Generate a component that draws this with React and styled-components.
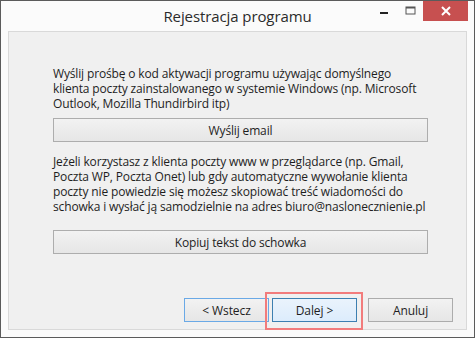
import React from 'react';
import styled, { createGlobalStyle } from 'styled-components';

const GlobalStyle = createGlobalStyle`
  html, body {
    margin: 0;
    padding: 0;
    background: #ffffff;
  }
  body {
    font-family: "Open Sans", "Noto Sans", sans-serif;
  }
`;

// okno dialogu
const Window = styled.div`
  position: relative;
  box-sizing: border-box;
  width: 475px;
  height: 338px;
  border: 1px solid #5b5b5b;
  background: #fbfbfb;
  display: flex;
  flex-direction: column;
`;

const TitleBar = styled.div`
  position: relative;
  height: 30px;
  display: flex;
  align-items: center;
  justify-content: center;
`;

const Title = styled.div`
  font-size: 15px;
  color: #2b2b2b;
  letter-spacing: -0.1px;
  margin-top: -1px;
`;

const Controls = styled.div`
  position: absolute;
  top: 0;
  right: 6px;
  display: flex;
  align-items: flex-start;
`;

const CtrlButton = styled.div`
  width: ${p => p.wide ? '45px' : '26px'};
  height: 20px;
  display: flex;
  align-items: center;
  justify-content: center;
  background: ${p => p.close ? '#c75050' : 'transparent'};
`;

const Panel = styled.div`
  margin: 0 7px 7px 7px;
  flex: 1;
  background: #f0f0f0;
  border: 1px solid #d9d9d9;
  padding: 34px 38px 0 44px;
  display: flex;
  flex-direction: column;
`;

const Text = styled.p`
  margin: 0;
  margin-top: ${p => p.top || 0}px;
  font-size: 12px;
  line-height: 15px;
  color: #1e1e1e;
  letter-spacing: -0.15px;
  white-space: nowrap;
`;

const WideButton = styled.div`
  margin-top: ${p => p.top || 5}px;
  height: 24px;
  box-sizing: border-box;
  border: 1px solid #adadad;
  background: linear-gradient(#f2f2f2, #e6e6e6);
  display: flex;
  align-items: center;
  justify-content: center;
  font-size: 12px;
  color: #1e1e1e;
  letter-spacing: -0.15px;
`;

const Footer = styled.div`
  margin-top: auto;
  margin-right: -25px;
  margin-bottom: 7px;
  display: flex;
  justify-content: flex-end;
  align-items: center;
`;

const NavButton = styled.div`
  position: relative;
  box-sizing: border-box;
  width: 85px;
  height: 24px;
  margin-left: ${p => p.gap || 0}px;
  border: 1px solid ${p => p.variant === 'default' ? '#3c7fb1' : p.variant === 'focus' ? '#6aa9e6' : '#acacac'};
  background: ${p => p.variant === 'default'
    ? 'linear-gradient(#eaf3fc, #dcecfc)'
    : 'linear-gradient(#f2f2f2, #e6e6e6)'};
  display: flex;
  align-items: center;
  justify-content: center;
  font-size: 12px;
  color: #1e1e1e;
  letter-spacing: -0.1px;
`;

const Highlight = styled.div`
  position: absolute;
  left: -8px;
  top: -7px;
  right: -7px;
  bottom: -9px;
  border: 2px solid #f27c7c;
  pointer-events: none;
`;

export default function App() {
  return (
    <>
      <GlobalStyle />
      <Window>
        <TitleBar>
          <Title>Rejestracja programu</Title>
          <Controls>
            <CtrlButton>
              <svg width="10" height="10" viewBox="0 0 10 10">
                <rect x="1" y="6" width="8" height="2" fill="#222" />
              </svg>
            </CtrlButton>
            <CtrlButton>
              <svg width="11" height="10" viewBox="0 0 11 10">
                <rect x="1" y="1" width="9" height="7" fill="none" stroke="#555" strokeWidth="1" />
                <rect x="1" y="1" width="9" height="1.5" fill="#555" />
              </svg>
            </CtrlButton>
            <CtrlButton wide close>
              <svg width="12" height="10" viewBox="0 0 12 10">
                <path d="M2 1 L10 9 M10 1 L2 9" stroke="#fff" strokeWidth="2" />
              </svg>
            </CtrlButton>
          </Controls>
        </TitleBar>
        <Panel>
          <Text>
            Wyślij prośbę o kod aktywacji programu używając domyślnego<br />
            klienta poczty zainstalowanego w systemie Windows (np. Microsoft<br />
            Outlook, Mozilla Thundirbird itp)
          </Text>
          <WideButton top={7}>Wyślij email</WideButton>
          <Text top={12}>
            Jeżeli korzystasz z klienta poczty www w przeglądarce (np. Gmail,<br />
            Poczta WP, Poczta Onet) lub gdy automatyczne wywołanie klienta<br />
            poczty nie powiedzie się możesz skopiować treść wiadomości do<br />
            schowka i wysłać ją samodzielnie na adres biuro@naslonecznienie.pl
          </Text>
          <WideButton top={16}>Kopiuj tekst do schowka</WideButton>
          <Footer>
            <NavButton variant="focus">&lt; Wstecz</NavButton>
            <NavButton variant="default" gap={3}>
              Dalej &gt;
              <Highlight />
            </NavButton>
            <NavButton gap={11}>Anuluj</NavButton>
          </Footer>
        </Panel>
      </Window>
    </>
  );
}
